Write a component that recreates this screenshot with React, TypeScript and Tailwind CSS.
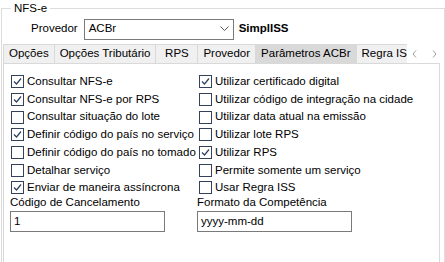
import React from "react";

const font = { fontFamily: '"Liberation Sans", Arial, sans-serif' };

function Check({ checked }: { checked: boolean }) {
  return (
    <span className="w-[13px] h-[13px] border border-[#33415a] bg-white flex items-center justify-center shrink-0">
      {checked && (
        <svg width="9" height="9" viewBox="0 0 9 9">
          <path d="M1 4.5 L3.5 7 L8 1.5" fill="none" stroke="#2d3f5e" strokeWidth="1.2" />
        </svg>
      )}
    </span>
  );
}

function Row({ label, checked }: { label: string; checked: boolean }) {
  return (
    <div className="h-[17.7px] flex items-center gap-[3px]">
      <Check checked={checked} />
      <span className="text-[11.5px] text-black leading-none whitespace-nowrap">{label}</span>
    </div>
  );
}

const tabs = ["Opções", "Opções Tributário", "RPS", "Provedor", "Parâmetros ACBr", "Regra ISS"];

export default function App() {
  const left: [string, boolean][] = [
    ["Consultar NFS-e", true],
    ["Consultar NFS-e por RPS", true],
    ["Consultar situação do lote", false],
    ["Definir código do país no serviço", true],
    ["Definir código do país no tomado", false],
    ["Detalhar serviço", false],
    ["Enviar de maneira assíncrona", true],
  ];
  const right: [string, boolean][] = [
    ["Utilizar certificado digital", true],
    ["Utilizar código de integração na cidade", false],
    ["Utilizar data atual na emissão", false],
    ["Utilizar lote RPS", false],
    ["Utilizar RPS", true],
    ["Permite somente um serviço", false],
    ["Usar Regra ISS", false],
  ];
  return (
    <div className="w-[445px] h-[262px] bg-white overflow-hidden text-black" style={font}>
      <fieldset className="ml-[1px] mt-[2px] border border-[#dcdcdc] h-[300px] px-0 pt-0">
        <legend className="ml-[9px] px-[3px] text-[11.5px] leading-[13px]">NFS-e</legend>
        <div className="flex items-center h-[22px] mt-[3px]">
          <span className="ml-[29px] text-[11.5px]">Provedor</span>
          <div className="ml-[6px] w-[150px] h-[21px] border border-[#7a7a7a] flex items-center justify-between px-[4px] bg-white">
            <span className="text-[11.5px]">ACBr</span>
            <svg width="9" height="6" viewBox="0 0 9 6">
              <path d="M0.5 0.5 L4.5 4.5 L8.5 0.5" fill="none" stroke="#555" strokeWidth="1" />
            </svg>
          </div>
          <span className="ml-[5px] text-[11.5px] font-bold">SimplISS</span>
        </div>
        <div className="ml-[1px] mr-[4px] mt-[4px]">
          <div className="flex h-[19px] items-end">
            {tabs.map((t) => {
              const sel = t === "Parâmetros ACBr";
              const extra =
                t === "Regra ISS"
                  ? "w-[52px] overflow-hidden justify-start"
                  : t === "RPS"
                  ? "min-w-[43px] justify-center"
                  : "justify-center";
              return (
                <div
                  key={t}
                  className={`h-[19px] px-[5px] border border-b-0 border-[#d9d9d9] -mr-[1px] flex items-center text-[11.5px] whitespace-nowrap ${sel ? "bg-[#d9d9d9]" : "bg-[#f0f0f0]"} ${extra}`}
                >
                  {t}
                </div>
              );
            })}
            <div className="flex-1 h-[19px] flex items-center pl-[5px] gap-[15px] bg-white">
              <svg width="5" height="8" viewBox="0 0 5 8">
                <path d="M4 0.5 L1 4 L4 7.5" fill="none" stroke="#a0a0a0" strokeWidth="1" />
              </svg>
              <svg width="5" height="8" viewBox="0 0 5 8">
                <path d="M1 0.5 L4 4 L1 7.5" fill="none" stroke="#a0a0a0" strokeWidth="1" />
              </svg>
            </div>
          </div>
          <div className="border border-[#d9d9d9] bg-white h-[210px] pt-[9px]">
            <div className="flex">
              <div className="ml-[7px] w-[188px]">
                {left.map(([l, c]) => (
                  <Row key={l} label={l} checked={c} />
                ))}
              </div>
              <div>
                {right.map(([l, c]) => (
                  <Row key={l} label={l} checked={c} />
                ))}
              </div>
            </div>
            <div className="flex -mt-[2px]">
              <div className="ml-[6px] w-[187px]">
                <div className="text-[11.5px] leading-[14px]">Código de Cancelamento</div>
                <div className="mt-[2px] w-[155px] h-[21px] border border-[#7a7a7a] flex items-center px-[3px] text-[11.5px]">1</div>
              </div>
              <div>
                <div className="text-[11.5px] leading-[14px]">Formato da Competência</div>
                <div className="mt-[2px] w-[155px] h-[21px] border border-[#7a7a7a] flex items-center px-[3px] text-[11.5px]">yyyy-mm-dd</div>
              </div>
            </div>
          </div>
        </div>
      </fieldset>
    </div>
  );
}
